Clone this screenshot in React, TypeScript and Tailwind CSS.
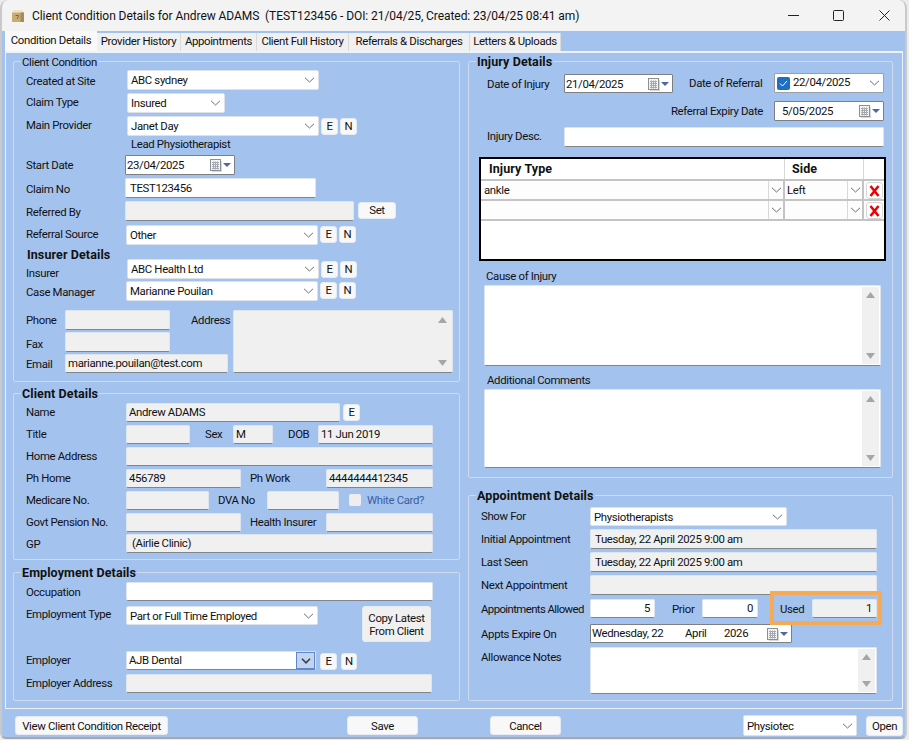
import type { ReactNode } from 'react';

const FONT = "font-['Roboto','Liberation_Sans',sans-serif]";
const BOLD = 'text-[12.5px] font-bold tracking-[0.1px]';

function Chevron() {
  return (
    <svg width="11" height="6" viewBox="0 0 11 6" fill="none" className="shrink-0">
      <path d="M1 .8l4.5 4.2L10 .8" stroke="#6f6f6f" strokeWidth="1" />
    </svg>
  );
}

function CalendarIcon() {
  return (
    <svg width="23" height="14" viewBox="0 0 23 14" className="shrink-0">
      <rect x="3" y="3" width="10" height="11" fill="#d8d8d8" />
      <rect x="1.5" y="1.5" width="10" height="11" fill="#f4f4f4" stroke="#8a8f98" />
      <path d="M3 4.5h7M3 6.5h7M3 8.5h7M3 10.5h7M4.5 3.5v8M6.5 3.5v8M8.5 3.5v8" stroke="#a5a9b0" strokeWidth="1" />
      <path d="M14 5h8l-4 4z" fill="#4d6a9c" />
    </svg>
  );
}

function Label({ children, className = '' }: { children: ReactNode; className?: string }) {
  return <div className={`shrink-0 whitespace-nowrap leading-[16px] ${className}`}>{children}</div>;
}

function Field({
  children,
  className = '',
  disabled = false,
  right = false,
}: {
  children?: ReactNode;
  className?: string;
  disabled?: boolean;
  right?: boolean;
}) {
  return (
    <div
      className={`flex shrink-0 items-center overflow-hidden whitespace-nowrap rounded-[2px] border border-[#dfe5ee] border-b-[#80858c] px-[4px] ${
        disabled ? 'bg-[#f0f0f0]' : 'bg-white'
      } ${right ? 'justify-end' : ''} ${className}`}
    >
      {children}
    </div>
  );
}

function Combo({ value, className = '' }: { value?: string; className?: string }) {
  return (
    <div
      className={`flex shrink-0 items-center justify-between whitespace-nowrap rounded-[2px] border border-[#dde2ea] bg-white pl-[3px] pr-[3px] ${className}`}
    >
      <span className="pt-[2px]">{value}</span>
      <Chevron />
    </div>
  );
}

function DateBox({ value, className = '' }: { value: string; className?: string }) {
  return (
    <div
      className={`flex shrink-0 items-center justify-between rounded-[1px] border border-[#7d7f85] bg-white pl-[1px] pr-[2px] ${className}`}
    >
      <span className="pt-[2px]">{value}</span>
      <CalendarIcon />
    </div>
  );
}

function Btn({ children, className = '' }: { children: ReactNode; className?: string }) {
  return (
    <div
      className={`flex shrink-0 items-center justify-center whitespace-nowrap rounded-[3px] border border-[#e6ebf3] bg-[#f8f8f8] text-center ${className}`}
    >
      {children}
    </div>
  );
}

function EN({ className = '' }: { className?: string }) {
  return (
    <>
      <Btn className={`ml-[2px] h-[17px] w-[17px] ${className}`}>E</Btn>
      <Btn className={`ml-[2px] h-[17px] w-[17px] ${className}`}>N</Btn>
    </>
  );
}

function Group({
  title,
  bold = true,
  children,
  className = '',
}: {
  title: string;
  bold?: boolean;
  children: ReactNode;
  className?: string;
}) {
  return (
    <div className={`relative shrink-0 rounded-[2px] border border-[#ccdbf1] ${className}`}>
      <div className={`absolute left-[7px] top-[-8px] bg-[#a4c2ee] px-[1px] leading-[16px] ${bold ? BOLD : ''}`}>
        {title}
      </div>
      {children}
    </div>
  );
}

function TextArea({ className = '', disabled = false }: { className?: string; disabled?: boolean }) {
  return (
    <div
      className={`flex shrink-0 justify-end rounded-[2px] border border-[#dfe5ee] border-b-[#80858c] p-[1px] ${
        disabled ? 'bg-[#f0f0f0]' : 'bg-white'
      } ${className}`}
    >
      <div className="flex w-[17px] flex-col items-center justify-between bg-[#f0f0f0] py-[5px]">
        <svg width="9" height="6" viewBox="0 0 9 6"><path d="M4.5 0L9 6H0z" fill="#a6a6a6" /></svg>
        <svg width="9" height="6" viewBox="0 0 9 6"><path d="M0 0h9L4.5 6z" fill="#a6a6a6" /></svg>
      </div>
    </div>
  );
}

function InjuryRow({ type, side }: { type?: string; side?: string }) {
  return (
    <div className="flex h-[20px] border-b-2 border-[#c4c4c4]">
      <div className="flex w-[304px] items-center justify-between bg-[#fdfdfd] pl-[3px]">
        <span className="pt-[2px]">{type}</span>
        <div className="flex h-full w-[17px] items-center justify-center border-l border-[#d8d8d8] border-r-2 border-r-[#c4c4c4]">
          <Chevron />
        </div>
      </div>
      <div className="flex w-[79px] items-center justify-between bg-[#fdfdfd] pl-[2px]">
        <span className="pt-[2px]">{side}</span>
        <div className="flex h-full w-[17px] items-center justify-center border-l border-[#d8d8d8] border-r-2 border-r-[#c4c4c4]">
          <Chevron />
        </div>
      </div>
      <div className="flex flex-1 items-start justify-center pt-[1px]">
        <div className="flex h-[17px] w-[17px] items-center justify-center rounded-[3px] border border-[#d6d6d6] bg-white">
          <svg width="11" height="12" viewBox="0 0 11 12">
            <path d="M1.5 1l8 10M9.5 1l-8 10" stroke="#f00000" strokeWidth="2.6" />
          </svg>
        </div>
      </div>
    </div>
  );
}

const TABS = [
  { name: 'Provider History', w: 'w-[84px]' },
  { name: 'Appointments', w: 'w-[76px]' },
  { name: 'Client Full History', w: 'w-[92px]' },
  { name: 'Referrals & Discharges', w: 'w-[121px]' },
  { name: 'Letters & Uploads', w: 'w-[91px]' },
];

export default function App() {
  return (
    <div className={`h-[740px] w-[909px] overflow-hidden bg-[#ececec] text-[11.4px] tracking-[-0.35px] text-[#111] ${FONT}`}>
      <div className="h-[739px] w-[907px] overflow-hidden rounded-t-[8px] rounded-b-[6px] border-x-2 border-b-2 border-x-[#c9c9c9] border-b-[#a8a8a8] bg-[#a4c2ee]">
        {/* title bar */}
        <div className="flex h-[31px] items-center bg-[#f3f3f3]">
          <svg width="14" height="14" viewBox="0 0 14 14" className="ml-[9px] shrink-0">
            <path d="M1 3.5L3 1h8l2 2.5z" fill="#efe2c4" />
            <rect x="1" y="3.5" width="12" height="9.5" fill="#c9ab74" />
            <path d="M9.5 3.5H13V13H9.5z" fill="#a98a58" />
            <path d="M4.5 6.5h3v1.2l-1 1v1" stroke="#7d6238" strokeWidth="1" fill="none" />
          </svg>
          <div className="ml-[7px] flex-1 whitespace-pre text-[12px] tracking-[-0.07px]">
            Client Condition Details for Andrew ADAMS  (TEST123456 - DOI: 21/04/25, Created: 23/04/25 08:41 am)
          </div>
          <svg width="11" height="11" viewBox="0 0 11 11" className="shrink-0">
            <path d="M0 5.5h11" stroke="#222" />
          </svg>
          <svg width="11" height="11" viewBox="0 0 11 11" className="ml-[34px] shrink-0">
            <rect x=".5" y=".5" width="10" height="10" rx="1" fill="none" stroke="#222" />
          </svg>
          <svg width="11" height="11" viewBox="0 0 11 11" className="ml-[35px] mr-[15px] shrink-0">
            <path d="M.5.5l10 10M10.5.5l-10 10" stroke="#222" />
          </svg>
        </div>

        {/* tabs */}
        <div className="ml-[3px] flex h-[20px] items-end">
          <div className="flex h-[20px] w-[92px] items-center justify-center bg-[#f9f9f9]">Condition Details</div>
          {TABS.map((t) => (
            <div
              key={t.name}
              className={`flex h-[18px] shrink-0 items-center justify-center whitespace-nowrap border-r border-[#d9d9d9] bg-[#f0f0f0] ${t.w}`}
            >
              {t.name}
            </div>
          ))}
        </div>

        {/* tab page */}
        <div className="ml-[3px] flex h-[658px] w-[898px] gap-[8px] border border-t-2 border-[#eef3fb] pl-[7px] pt-[8px]">
          <div className="flex w-[447px] shrink-0 flex-col">
            <Group title="Client Condition" bold={false} className="h-[321px] pl-[12px] pt-[8px]">
              <div className="flex h-[20px]">
                <Label className="w-[101px] pt-[3px]">Created at Site</Label>
                <Combo value="ABC sydney" className="w-[192px]" />
              </div>
              <div className="mt-[3px] flex h-[20px]">
                <Label className="w-[101px] pt-[1px]">Claim Type</Label>
                <Combo value="Insured" className="w-[98px]" />
              </div>
              <div className="mt-[3px] flex h-[20px]">
                <Label className="w-[101px] pt-[1px]">Main Provider</Label>
                <Combo value="Janet Day" className="w-[192px]" />
                <EN className="mt-[2px]" />
              </div>
              <div className="flex h-[16px] pl-[105px]">
                <Label>Lead Physiotherapist</Label>
              </div>
              <div className="mt-[3px] flex h-[20px]">
                <Label className="w-[99px] pt-[2px]">Start Date</Label>
                <DateBox value="23/04/2025" className="w-[110px]" />
              </div>
              <div className="mt-[3px] flex h-[20px]">
                <Label className="w-[99px] pt-[3px]">Claim No</Label>
                <Field className="w-[191px] pt-[2px]">TEST123456</Field>
              </div>
              <div className="mt-[3px] flex h-[20px]">
                <Label className="w-[99px] pt-[3px]">Referred By</Label>
                <Field disabled className="w-[229px]" />
                <Btn className="ml-[4px] mt-[1px] h-[17px] w-[38px]">Set</Btn>
              </div>
              <div className="mt-[4px] flex h-[20px]">
                <Label className="w-[100px] pt-[1px]">Referral Source</Label>
                <Combo value="Other" className="w-[192px]" />
                <EN className="mt-[1px]" />
              </div>
              <div className="mt-[2px] flex h-[34px]">
                <div className="w-[101px] shrink-0">
                  <Label className={`pl-[1px] ${BOLD}`}>Insurer Details</Label>
                  <Label className="pt-[2px]">Insurer</Label>
                </div>
                <Combo value="ABC Health Ltd" className="mt-[12px] h-[20px] w-[192px]" />
                <EN className="mt-[14px]" />
              </div>
              <div className="flex h-[20px]">
                <Label className="w-[100px] pt-[3px]">Case Manager</Label>
                <Combo value="Marianne Pouilan" className="w-[192px]" />
                <EN className="mt-[1px]" />
              </div>
              <div className="mt-[9px] flex h-[63px]">
                <div className="w-[207px] shrink-0">
                  <div className="flex h-[20px]">
                    <Label className="w-[39px] pt-[2px]">Phone</Label>
                    <Field disabled className="w-[105px]" />
                    <Label className="ml-[21px] pt-[2px]">Address</Label>
                  </div>
                  <div className="mt-[2px] flex h-[20px]">
                    <Label className="w-[39px] pt-[4px]">Fax</Label>
                    <Field disabled className="w-[105px]" />
                  </div>
                  <div className="mt-[2px] flex h-[19px]">
                    <Label className="w-[39px] pt-[2px]">Email</Label>
                    <Field disabled className="w-[163px] !px-[2px]">marianne.pouilan@test.com</Field>
                  </div>
                </div>
                <TextArea disabled className="h-[63px] w-[220px]" />
              </div>
            </Group>

            <Group title="Client Details" className="mt-[11px] h-[167px] pl-[12px] pt-[9px]">
              <div className="flex h-[19px]">
                <Label className="w-[100px] pt-[1px]">Name</Label>
                <Field disabled className="w-[214px] !px-[2px]">Andrew ADAMS</Field>
                <Btn className="ml-[3px] mt-[1px] h-[17px] w-[17px]">E</Btn>
              </div>
              <div className="mt-[3px] flex h-[19px]">
                <Label className="w-[100px] pt-[1px]">Title</Label>
                <Field disabled className="w-[64px]" />
                <Label className="ml-[15px] w-[28px] pt-[1px]">Sex</Label>
                <Field disabled className="w-[40px] !px-[2px]">M</Field>
                <Label className="ml-[15px] w-[30px] pt-[1px]">DOB</Label>
                <Field disabled className="w-[115px] !px-[2px]">11 Jun 2019</Field>
              </div>
              <div className="mt-[3px] flex h-[19px]">
                <Label className="w-[100px] pt-[1px]">Home Address</Label>
                <Field disabled className="w-[307px]" />
              </div>
              <div className="mt-[3px] flex h-[19px]">
                <Label className="w-[100px] pt-[1px]">Ph Home</Label>
                <Field disabled className="w-[115px] !px-[2px]">456789</Field>
                <Label className="ml-[9px] w-[76px] pt-[1px]">Ph Work</Label>
                <Field disabled className="w-[107px] !px-[2px]">4444444412345</Field>
              </div>
              <div className="mt-[3px] flex h-[19px]">
                <Label className="w-[100px] pt-[1px]">Medicare No.</Label>
                <Field disabled className="w-[83px]" />
                <Label className="ml-[9px] w-[49px] pt-[1px]">DVA No</Label>
                <Field disabled className="w-[72px]" />
                <div className="ml-[10px] mt-[3px] h-[12px] w-[12px] shrink-0 rounded-[2px] bg-[#eeeeee]" />
                <Label className="ml-[6px] pt-[1px] text-[#3c5f9c]">White Card?</Label>
              </div>
              <div className="mt-[3px] flex h-[19px]">
                <Label className="w-[100px] pt-[1px]">Govt Pension No.</Label>
                <Field disabled className="w-[115px]" />
                <Label className="ml-[9px] w-[76px] pt-[1px]">Health Insurer</Label>
                <Field disabled className="w-[107px]" />
              </div>
              <div className="mt-[2px] flex h-[19px]">
                <Label className="w-[100px] pt-[2px]">GP</Label>
                <Field disabled className="w-[307px] !px-[5px]">(Airlie Clinic)</Field>
              </div>
            </Group>

            <Group title="Employment Details" className="mt-[12px] h-[129px] pl-[12px] pt-[9px]">
              <div className="flex h-[19px]">
                <Label className="w-[100px] pt-[2px]">Occupation</Label>
                <Field className="w-[307px]" />
              </div>
              <div className="mt-[5px] flex h-[36px]">
                <Label className="w-[100px]">Employment Type</Label>
                <Combo value="Part or Full Time Employed" className="h-[19px] w-[192px]" />
                <Btn className="ml-[44px] h-[36px] w-[69px] !bg-[#f0f0f0] pt-[2px] leading-[13px]">
                  <span>Copy Latest<br />From Client</span>
                </Btn>
              </div>
              <div className="mt-[9px] flex h-[19px]">
                <Label className="w-[100px] pt-[1px]">Employer</Label>
                <div className="flex w-[190px] shrink-0 items-stretch rounded-[2px] border border-[#dde2ea] border-b-[#80858c] bg-white">
                  <span className="flex-1 pl-[2px] leading-[17px]">AJB Dental</span>
                  <div className="flex w-[19px] items-center justify-center border border-[#5f86c8] bg-[#c4d4ec]">
                    <svg width="10" height="6" viewBox="0 0 10 6" fill="none">
                      <path d="M1 .8l4 4 4-4" stroke="#2b3f66" strokeWidth="1.6" />
                    </svg>
                  </div>
                </div>
                <Btn className="ml-[4px] mt-[2px] h-[17px] w-[17px]">E</Btn>
                <Btn className="ml-[4px] mt-[2px] h-[17px] w-[16px]">N</Btn>
              </div>
              <div className="mt-[4px] flex h-[19px]">
                <Label className="w-[100px] pt-[1px]">Employer Address</Label>
                <Field disabled className="w-[306px]" />
              </div>
            </Group>
          </div>

          <div className="flex w-[425px] shrink-0 flex-col">
            <Group title="Injury Details" className="h-[417px] pl-[18px] pt-[11px]">
              <div className="flex h-[21px]">
                <Label className="w-[77px] pt-[3px]">Date of Injury</Label>
                <DateBox value="21/04/2025" className="mt-[1px] h-[19px] w-[109px]" />
                <Label className="ml-[16px] w-[85px] pt-[2px]">Date of Referral</Label>
                <div className="flex h-[20px] w-[110px] shrink-0 items-center rounded-[1px] border border-[#9aa0a8] bg-white pl-[2px] pr-[3px]">
                  <div className="flex h-[13px] w-[13px] shrink-0 items-center justify-center rounded-[2px] bg-[#1f6fc0]">
                    <svg width="9" height="7" viewBox="0 0 9 7" fill="none">
                      <path d="M1 3.5l2.5 2.5L8 1" stroke="#fff" strokeWidth="1" />
                    </svg>
                  </div>
                  <span className="ml-[3px] flex-1">22/04/2025</span>
                  <Chevron />
                </div>
              </div>
              <div className="mt-[7px] flex h-[20px]">
                <Label className="w-[276px] pt-[2px] text-right">Referral Expiry Date</Label>
                <DateBox value="5/05/2025" className="ml-[11px] w-[110px] !pl-[7px]" />
              </div>
              <div className="mt-[6px] flex h-[20px]">
                <Label className="w-[77px] pt-[1px]">Injury Desc.</Label>
                <Field className="w-[320px]" />
              </div>

              <div className="ml-[-8px] mt-[10px] h-[104px] w-[407px] border-2 border-black bg-white">
                <div className="flex h-[22px] border-b-2 border-[#c4c4c4]">
                  <div className={`w-[304px] border-r border-[#d8d8d8] pl-[8px] leading-[20px] ${BOLD}`}>Injury Type</div>
                  <div className={`w-[79px] border-r border-[#d8d8d8] pl-[7px] leading-[20px] ${BOLD}`}>Side</div>
                </div>
                <InjuryRow type="ankle" side="Left" />
                <InjuryRow />
              </div>

              <Label className="ml-[-1px] mt-[7px]">Cause of Injury</Label>
              <TextArea className="ml-[-3px] mt-[1px] h-[81px] w-[397px]" />
              <Label className="mt-[6px]">Additional Comments</Label>
              <TextArea className="ml-[-3px] mt-[1px] h-[79px] w-[397px]" />
            </Group>

            <Group title="Appointment Details" className="mt-[17px] h-[206px] pl-[12px] pt-[11px]">
              <div className="flex h-[19px]">
                <Label className="w-[109px] pt-[1px]">Show For</Label>
                <Combo value="Physiotherapists" className="w-[197px]" />
              </div>
              <div className="mt-[3px] flex h-[20px]">
                <Label className="w-[109px] pt-[2px]">Initial Appointment</Label>
                <Field disabled className="w-[287px] pt-[2px]">Tuesday, 22 April 2025 9:00 am</Field>
              </div>
              <div className="mt-[3px] flex h-[20px]">
                <Label className="w-[109px] pt-[2px]">Last Seen</Label>
                <Field disabled className="w-[287px] pt-[2px]">Tuesday, 22 April 2025 9:00 am</Field>
              </div>
              <div className="mt-[3px] flex h-[20px]">
                <Label className="w-[109px] pt-[2px]">Next Appointment</Label>
                <Field disabled className="w-[287px]" />
              </div>
              <div className="relative mt-[4px] flex h-[19px]">
                <Label className="w-[109px] pt-[2px] tracking-[-0.6px]">Appointments Allowed</Label>
                <Field right className="w-[65px]">5</Field>
                <Label className="ml-[17px] w-[30px] pt-[2px]">Prior</Label>
                <Field right className="w-[56px]">0</Field>
                <Label className="ml-[22px] w-[32px] pt-[2px]">Used</Label>
                <Field disabled right className="w-[65px]">1</Field>
                <div className="pointer-events-none absolute left-[289px] top-[-8px] h-[34px] w-[112px] border-4 border-[#f7aa56]" />
              </div>
              <div className="mt-[6px] flex h-[19px]">
                <Label className="w-[109px] pt-[2px]">Appts Expire On</Label>
                <div className="flex w-[202px] shrink-0 items-center rounded-[1px] border border-[#7d7f85] bg-white pl-[1px] pr-[2px]">
                  <span className="w-[93px]">Wednesday, 22</span>
                  <span className="w-[39px]">April</span>
                  <span className="flex-1">2026</span>
                  <CalendarIcon />
                </div>
              </div>
              <div className="mt-[4px] flex h-[47px]">
                <Label className="w-[109px] pt-[2px]">Allowance Notes</Label>
                <TextArea className="h-[47px] w-[287px]" />
              </div>
            </Group>
          </div>
        </div>

        {/* bottom bar */}
        <div className="flex pl-[13px] pt-[7px]">
          <Btn className="h-[19px] w-[153px] pt-[2px]">View Client Condition Receipt</Btn>
          <Btn className="ml-[179px] h-[19px] w-[71px] pt-[2px]">Save</Btn>
          <Btn className="ml-[72px] h-[19px] w-[71px] pt-[2px]">Cancel</Btn>
          <Combo value="Physiotec" className="ml-[182px] mt-[-1px] h-[21px] w-[114px]" />
          <Btn className="ml-[9px] h-[20px] w-[37px] pt-[2px]">Open</Btn>
        </div>
      </div>
    </div>
  );
}
